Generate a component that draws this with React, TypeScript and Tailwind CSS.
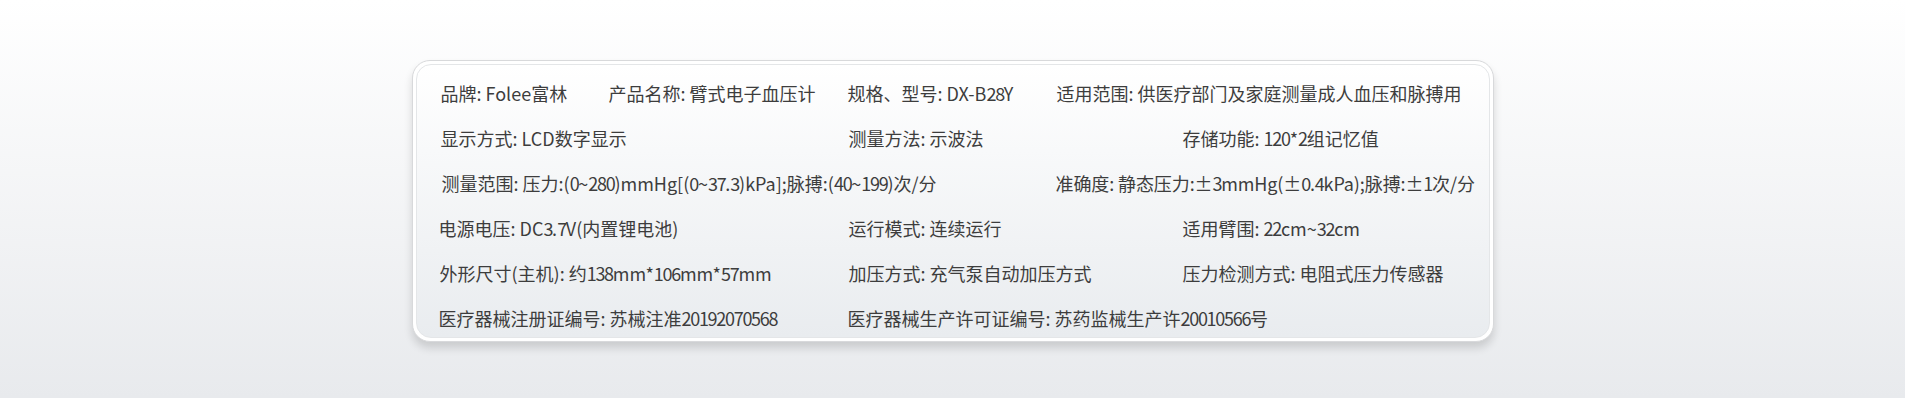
const rows: { text: string; w?: string }[][] = [
  [
    { text: '品牌: Folee富林', w: 'w-[168px]' },
    { text: '产品名称: 臂式电子血压计', w: 'w-[239px]' },
    { text: '规格、型号: DX-B28Y', w: 'w-[209px]' },
    { text: '适用范围: 供医疗部门及家庭测量成人血压和脉搏用' },
  ],
  [
    { text: '显示方式: LCD数字显示', w: 'w-[408px]' },
    { text: '测量方法: 示波法', w: 'w-[334px]' },
    { text: '存储功能: 120*2组记忆值' },
  ],
  [
    { text: '测量范围: 压力:(0~280)mmHg[(0~37.3)kPa];脉搏:(40~199)次/分', w: 'w-[615px] pl-[1px]' },
    { text: '准确度: 静态压力:±3mmHg(±0.4kPa);脉搏:±1次/分', w: 'tracking-[-0.1px]' },
  ],
  [
    { text: '电源电压: DC3.7V(内置锂电池)', w: 'w-[410px] -ml-[2px]' },
    { text: '运行模式: 连续运行', w: 'w-[334px]' },
    { text: '适用臂围: 22cm~32cm' },
  ],
  [
    { text: '外形尺寸(主机): 约138mm*106mm*57mm', w: 'w-[409px] -ml-[1px]' },
    { text: '加压方式: 充气泵自动加压方式', w: 'w-[334px]' },
    { text: '压力检测方式: 电阻式压力传感器' },
  ],
  [
    { text: '医疗器械注册证编号: 苏械注准20192070568', w: 'w-[409px] -ml-[2px]' },
    { text: '医疗器械生产许可证编号: 苏药监械生产许20010566号' },
  ],
];

// digits in the artwork are set tighter than the CJK font's own figures
function Spec({ text }: { text: string }) {
  return (
    <>
      {text.split(/(\d+)/).map((part, i) =>
        /^\d+$/.test(part) ? (
          <span key={i} className="tracking-[-1.3px]">
            {part}
          </span>
        ) : (
          part
        ),
      )}
    </>
  );
}

export default function App() {
  return (
    <div className="h-[398px] w-full bg-gradient-to-b from-white to-[#e8eaed] pt-[60px] font-['Noto_Sans_CJK_SC','Liberation_Sans',sans-serif]">
      <div className="mx-auto w-[1082px] rounded-[18px] border border-[#d8d9db] bg-white p-[3px] shadow-[0_6px_8px_rgba(0,0,0,0.14)]">
        <div className="flex flex-col gap-[21px] rounded-[15px] border border-[#e4e6e8] bg-gradient-to-b from-white to-[#e9ecef] pb-[7px] pl-[24px] pt-[16px] text-[18px] leading-[24px] text-[#3d3d3d]">
          {rows.map((row, i) => (
            <div key={i} className="flex whitespace-nowrap">
              {row.map(item => (
                <div key={item.text} className={item.w ?? ''}>
                  <Spec text={item.text} />
                </div>
              ))}
            </div>
          ))}
        </div>
      </div>
    </div>
  );
}
